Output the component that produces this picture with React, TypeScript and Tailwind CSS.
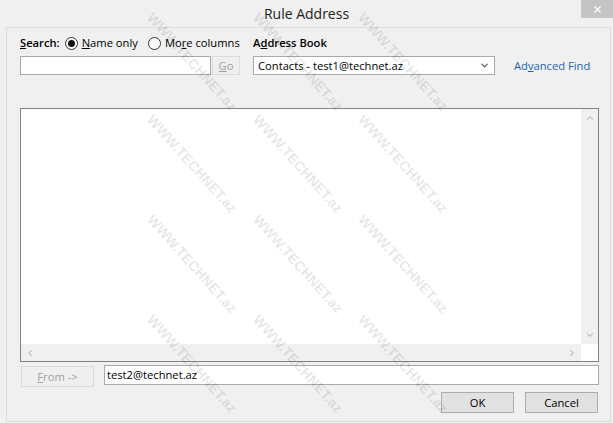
import { ChevronDown, ChevronUp, ChevronLeft, ChevronRight, X } from 'lucide-react';

const WATERMARK_COLS = [150, 256, 361];
const WATERMARK_ROWS = [8, 110, 210, 310];

function Radio({ checked, label }: { checked?: boolean; label: [string, string, string] }) {
  return (
    <label className="flex items-center gap-[4px] whitespace-nowrap">
      <span className="flex h-[13px] w-[13px] items-center justify-center rounded-full border border-[#333] bg-white">
        {checked && <span className="h-[7px] w-[7px] rounded-full bg-[#111]" />}
      </span>
      <span>
        {label[0]}
        <span className="underline">{label[1]}</span>
        {label[2]}
      </span>
    </label>
  );
}

export default function App() {
  return (
    <div className="relative h-[423px] w-[613px] overflow-hidden whitespace-nowrap bg-[#f0f0f0] font-['Open_Sans','Noto_Sans',sans-serif] text-[11.2px] leading-none text-black">
      {/* title bar */}
      <div className="relative flex h-[27px] items-center justify-center">
        <span className="text-[14px] text-[#222]">Rule Address</span>
        <div className="absolute right-0 top-0 flex h-[18px] w-[32px] items-center justify-center bg-[#c4c4c4]">
          <X className="h-[11px] w-[11px] text-white" strokeWidth={2.5} />
        </div>
      </div>

      <div className="ml-[6px] mr-[2px] flex h-[395px] flex-col border border-[#dcdcdc] pl-[13px] pr-[11px]">
        {/* search + address book */}
        <div className="mt-[8px] flex">
          <div className="flex w-[233px] flex-col gap-[6px]">
            <div className="flex h-[14px] items-center">
              <span className="font-semibold">
                <span className="underline">S</span>earch:
              </span>
              <span className="ml-[5px]">
                <Radio checked label={['', 'N', 'ame only']} />
              </span>
              <span className="ml-[10px]">
                <Radio label={['Mo', 'r', 'e columns']} />
              </span>
            </div>
            <div className="flex items-center">
              <div className="h-[19px] w-[191px] border border-[#a9a9a9] bg-white" />
              <div className="ml-[1px] flex h-[19px] w-[28px] items-center justify-center border border-[#dcdcdc] bg-[#efefef] text-[#a0a0a0]">
                <span className="underline">G</span>o
              </div>
            </div>
          </div>
          <div className="flex flex-col gap-[6px]">
            <div className="flex h-[14px] items-center font-semibold">
              A<span className="underline">d</span>dress Book
            </div>
            <div className="flex items-center">
              <div className="flex h-[19px] w-[242px] items-center justify-between border border-[#a9a9a9] bg-white pl-[4px] pr-[4px]">
                <span>Contacts - test1@technet.az</span>
                <ChevronDown className="h-[11px] w-[11px] text-[#555]" strokeWidth={2.5} />
              </div>
              <span className="ml-[19px] text-[#2366b0]">
                Ad<span className="underline">v</span>anced Find
              </span>
            </div>
          </div>
        </div>

        {/* results list */}
        <div className="mt-[33px] flex h-[254px] flex-col border border-[#828282] bg-white">
          <div className="flex flex-1">
            <div className="flex-1" />
            <div className="flex w-[17px] flex-col items-center justify-between bg-[#f0f0f0] py-[4px]">
              <ChevronUp className="h-[10px] w-[10px] text-[#b0b0b0]" strokeWidth={2.5} />
              <ChevronDown className="h-[10px] w-[10px] text-[#b0b0b0]" strokeWidth={2.5} />
            </div>
          </div>
          <div className="flex h-[17px]">
            <div className="flex flex-1 items-center justify-between bg-[#f0f0f0] px-[4px]">
              <ChevronLeft className="h-[10px] w-[10px] text-[#b0b0b0]" strokeWidth={2.5} />
              <ChevronRight className="h-[10px] w-[10px] text-[#b0b0b0]" strokeWidth={2.5} />
            </div>
            <div className="w-[17px] bg-white" />
          </div>
        </div>

        {/* from row */}
        <div className="mt-[3px] flex items-start">
          <div className="ml-[1px] mt-[1px] flex h-[21px] w-[73px] items-center justify-center border border-[#dcdcdc] bg-[#efefef] text-[#a0a0a0]">
            <span className="underline">F</span>rom -&gt;
          </div>
          <div className="ml-[10px] flex h-[20px] flex-1 items-center border border-[#a9a9a9] bg-white pl-[2px]">
            test2@technet.az
          </div>
        </div>

        {/* buttons */}
        <div className="mt-[5px] flex justify-end gap-[11px] pr-[1px]">
          <div className="flex h-[21px] w-[73px] items-center justify-center border border-[#adadad] bg-[#e1e1e1]">OK</div>
          <div className="flex h-[21px] w-[73px] items-center justify-center border border-[#adadad] bg-[#e1e1e1]">Cancel</div>
        </div>
      </div>

      {/* watermark */}
      {WATERMARK_COLS.map((x) =>
        WATERMARK_ROWS.map((y) => (
          <span
            key={`${x}-${y}`}
            className="pointer-events-none absolute origin-left rotate-[48deg] font-['Liberation_Sans',sans-serif] text-[14px] font-bold text-black/[0.11]"
            style={{ left: x, top: y }}
          >
            WWW.TECHNET.az
          </span>
        ))
      )}
    </div>
  );
}
